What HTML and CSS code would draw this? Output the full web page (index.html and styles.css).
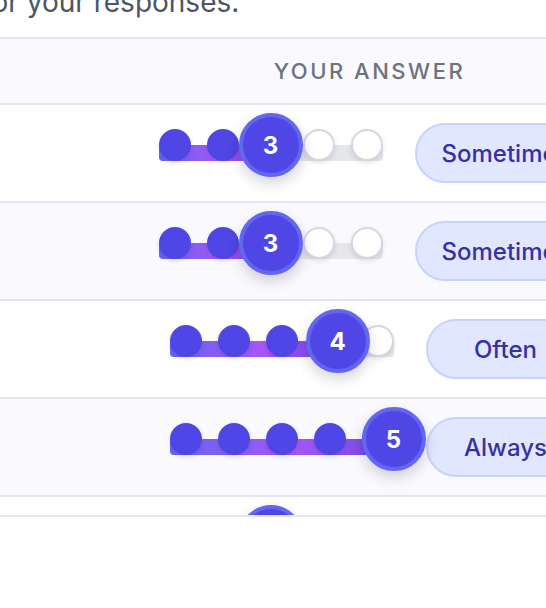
FILE: index.html
```html
<!DOCTYPE html>
<html lang="en">
<head>
<meta charset="utf-8">
<title>Your answers</title>
<link rel="stylesheet" href="styles.css">
</head>
<body>
<div class="page">
  <p class="intro">for your responses.</p>
  <div class="table">
    <div class="row head">
      <div class="cell q"></div>
      <div class="cell a head-cell">Your answer</div>
    </div>

    <div class="row">
      <div class="cell q"></div>
      <div class="cell a">
        <div class="slider">
          <div class="track"><div class="fill" style="width:50%"></div></div>
          <div class="dots">
            <span class="dot on"></span><span class="dot on"></span><span class="dot on"></span><span class="dot"></span><span class="dot"></span>
          </div>
          <div class="thumb" style="left:50%">3</div>
        </div>
        <span class="pill">Sometimes</span>
      </div>
    </div>

    <div class="row alt">
      <div class="cell q"></div>
      <div class="cell a">
        <div class="slider">
          <div class="track"><div class="fill" style="width:50%"></div></div>
          <div class="dots">
            <span class="dot on"></span><span class="dot on"></span><span class="dot on"></span><span class="dot"></span><span class="dot"></span>
          </div>
          <div class="thumb" style="left:50%">3</div>
        </div>
        <span class="pill">Sometimes</span>
      </div>
    </div>

    <div class="row">
      <div class="cell q"></div>
      <div class="cell a">
        <div class="slider">
          <div class="track"><div class="fill" style="width:75%"></div></div>
          <div class="dots">
            <span class="dot on"></span><span class="dot on"></span><span class="dot on"></span><span class="dot on"></span><span class="dot"></span>
          </div>
          <div class="thumb" style="left:75%">4</div>
        </div>
        <span class="pill">Often</span>
      </div>
    </div>

    <div class="row alt">
      <div class="cell q"></div>
      <div class="cell a">
        <div class="slider">
          <div class="track"><div class="fill" style="width:100%"></div></div>
          <div class="dots">
            <span class="dot on"></span><span class="dot on"></span><span class="dot on"></span><span class="dot on"></span><span class="dot on"></span>
          </div>
          <div class="thumb" style="left:100%">5</div>
        </div>
        <span class="pill">Always</span>
      </div>
    </div>

    <div class="row">
      <div class="cell q"></div>
      <div class="cell a">
        <div class="slider">
          <div class="track"><div class="fill" style="width:50%"></div></div>
          <div class="dots">
            <span class="dot on"></span><span class="dot on"></span><span class="dot on"></span><span class="dot"></span><span class="dot"></span>
          </div>
          <div class="thumb" style="left:50%">3</div>
        </div>
        <span class="pill">Sometimes</span>
      </div>
    </div>
  </div>
</div>
</body>
</html>
```
FILE: styles.css
```css
* { box-sizing: border-box; }

html, body {
  margin: 0;
  padding: 0;
  background: #ffffff;
  overflow: hidden;
  width: 546px;
  height: 608px;
}

body {
  font-family: Inter, "Noto Sans", "Liberation Sans", sans-serif;
  color: #111827;
}

.page {
  margin: -18px 0 0 -40px;
  width: 720px;
}

.intro {
  margin: 0 0 15px 0;
  padding-left: 22px;
  font-size: 28px;
  line-height: 40px;
  color: #4b5563;
  white-space: nowrap;
}

.table {
  border: 2px solid #e5e5f0;
  max-height: 480px;
  overflow: hidden;
}

.row {
  display: grid;
  grid-template-columns: 176px 479px;
  border-bottom: 2px solid #e5e5f0;
  background: #ffffff;
}

.row.alt { background: #f9f9fe; }

.row.head {
  background: #f9f9fe;
  height: 66px;
}

.head-cell {
  display: flex;
  align-items: center;
  justify-content: center;
  padding-right: 16px;
  font-size: 22px;
  font-weight: 500;
  letter-spacing: 2.5px;
  text-transform: uppercase;
  color: #6b7280;
}

.cell.a:not(.head-cell) {
  display: flex;
  align-items: center;
  justify-content: center;
  gap: 32px;
  height: 96px;
}

.slider {
  position: relative;
  width: 224px;
  height: 48px;
  flex: none;
}

.track {
  position: absolute;
  top: 16px;
  left: 0;
  right: 0;
  height: 16px;
  border-radius: 4px;
  background: #e5e7eb;
  overflow: hidden;
}

.fill {
  height: 100%;
  background: linear-gradient(90deg, #6366f1 0%, #a855f7 55%, #6d4ae6 100%);
}

.dots {
  position: relative;
  z-index: 1;
  display: flex;
  gap: 16px;
}

.dot {
  width: 32px;
  height: 32px;
  border-radius: 50%;
  background: #ffffff;
  border: 2px solid #d5d6e0;
  box-shadow: 0 2px 5px rgba(17, 24, 39, 0.12);
}

.dot.on {
  background: #4f46e5;
  border-color: #4f46e5;
}

.thumb {
  position: absolute;
  z-index: 2;
  top: -16px;
  width: 64px;
  height: 64px;
  margin-left: -32px;
  border-radius: 50%;
  background: #4f46e5;
  border: 4px solid #6366f1;
  box-shadow: 0 6px 14px rgba(17, 24, 39, 0.18);
  display: flex;
  align-items: center;
  justify-content: center;
  color: #ffffff;
  font-size: 24px;
  font-weight: 700;
}

.pill {
  flex: none;
  display: inline-flex;
  align-items: center;
  justify-content: center;
  height: 60px;
  min-width: 160px;
  padding: 0 25px;
  border-radius: 30px;
  background: #e0e7ff;
  border: 2px solid #c7d2fe;
  color: #3730a3;
  font-size: 24px;
  font-weight: 500;
}
```
